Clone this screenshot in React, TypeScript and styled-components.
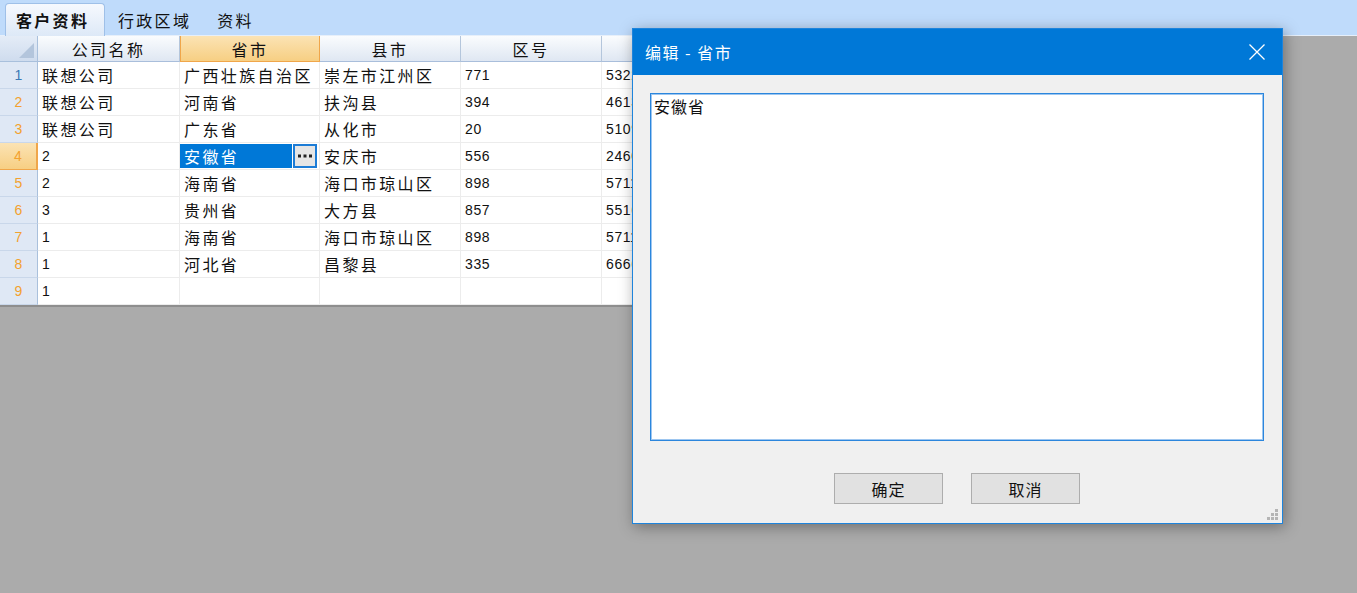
import { FC } from 'react';
import styled, { createGlobalStyle, css } from 'styled-components';

const GlobalStyle = createGlobalStyle`
    html, body {
        margin: 0;
        padding: 0;
        background: #ababab;
    }
    #root {
        height: 593px;
    }
`;

const cjk = `"Noto Sans CJK SC", "Noto Sans", sans-serif`;
const latin = `"Liberation Sans", "Noto Sans CJK SC", sans-serif`;

interface IRow {
    company: string;
    province: string;
    county: string;
    code: string;
    zip: string;
}

const rows: IRow[] = [
    { company: '联想公司', province: '广西壮族自治区', county: '崇左市江州区', code: '771', zip: '532200' },
    { company: '联想公司', province: '河南省', county: '扶沟县', code: '394', zip: '461300' },
    { company: '联想公司', province: '广东省', county: '从化市', code: '20', zip: '510900' },
    { company: '2', province: '安徽省', county: '安庆市', code: '556', zip: '246000' },
    { company: '2', province: '海南省', county: '海口市琼山区', code: '898', zip: '571100' },
    { company: '3', province: '贵州省', county: '大方县', code: '857', zip: '551600' },
    { company: '1', province: '海南省', county: '海口市琼山区', code: '898', zip: '571100' },
    { company: '1', province: '河北省', county: '昌黎县', code: '335', zip: '666600' },
    { company: '1', province: '', county: '', code: '', zip: '' },
];

const columns = ['公司名称', '省市', '县市', '区号', '邮编'];
const SELECTED_ROW = 3;

const isLatin = (s: string) => /^[0-9]*$/.test(s);

const App: FC = () => {
    return (
        <>
            <GlobalStyle />
            <Page>
                <TabBar>
                    <Tab $active>客户资料</Tab>
                    <Tab>行政区域</Tab>
                    <Tab>资料</Tab>
                </TabBar>
                <Grid>
                    <Corner />
                    {columns.map((c, i) => (
                        <HeaderCell key={c} $current={i === 1}>{c}</HeaderCell>
                    ))}
                    {rows.map((r, i) => {
                        const current = i === SELECTED_ROW;
                        return [
                            <RowNum key={`n${i}`} $current={current} $first={i === 0}>{i + 1}</RowNum>,
                            <Cell key={`a${i}`} $latin={isLatin(r.company)}>{r.company}</Cell>,
                            current ? (
                                <EditCell key={`b${i}`}>
                                    <EditText>{r.province}</EditText>
                                    <EllipsisButton>
                                        <svg width="16" height="4" viewBox="0 0 16 4">
                                            <rect x="1" y="0.5" width="3" height="3" fill="#222" />
                                            <rect x="6.5" y="0.5" width="3" height="3" fill="#222" />
                                            <rect x="12" y="0.5" width="3" height="3" fill="#222" />
                                        </svg>
                                    </EllipsisButton>
                                </EditCell>
                            ) : (
                                <Cell key={`b${i}`}>{r.province}</Cell>
                            ),
                            <Cell key={`c${i}`}>{r.county}</Cell>,
                            <Cell key={`d${i}`} $latin>{r.code}</Cell>,
                            <Cell key={`e${i}`} $latin>{r.zip}</Cell>,
                        ];
                    })}
                </Grid>

                <Dialog>
                    <TitleBar>
                        <Title>编辑 - 省市</Title>
                        <CloseButton>
                            <svg width="18" height="18" viewBox="0 0 18 18">
                                <path d="M1.5 1.5 L16.5 16.5 M16.5 1.5 L1.5 16.5" stroke="#fff" strokeWidth="1.3" />
                            </svg>
                        </CloseButton>
                    </TitleBar>
                    <DialogBody>
                        <TextArea defaultValue="安徽省" />
                        <Buttons>
                            <Button>确定</Button>
                            <Button>取消</Button>
                        </Buttons>
                    </DialogBody>
                    <Grip>
                        <svg width="12" height="12" viewBox="0 0 12 12">
                            <rect x="8" y="0" width="3" height="3" fill="#b5b5b5" />
                            <rect x="4" y="4" width="3" height="3" fill="#b5b5b5" />
                            <rect x="8" y="4" width="3" height="3" fill="#b5b5b5" />
                            <rect x="0" y="8" width="3" height="3" fill="#b5b5b5" />
                            <rect x="4" y="8" width="3" height="3" fill="#b5b5b5" />
                            <rect x="8" y="8" width="3" height="3" fill="#b5b5b5" />
                        </svg>
                    </Grip>
                </Dialog>
            </Page>
        </>
    );
};

const Page = styled.div`
    position: relative;
    width: 1357px;
    height: 593px;
    overflow: hidden;
    background: #ababab;
    font-family: ${cjk};
`;

const TabBar = styled.div`
    display: flex;
    align-items: flex-end;
    height: 35px;
    padding-left: 5px;
    background: #bfdbfb;
    border-bottom: 1px solid #e6effa;
`;

const Tab = styled.div<{ $active?: boolean }>`
    height: 32px;
    padding: 0 12px 0 10px;
    display: flex;
    align-items: center;
    font-size: 16px;
    letter-spacing: 2.3px;
    color: #111;
    box-sizing: border-box;
    border: 1px solid transparent;
    border-bottom: none;

    ${({ $active }) => $active && css`
        width: 100px;
        height: 33px;
        margin-bottom: -1px;
        padding-left: 10px;
        font-weight: bold;
        border-color: #9fc0e8;
        border-radius: 4px 4px 0 0;
        background: linear-gradient(#f6f9fe, #dde9f7);
    `}

    & + & {
        padding-left: 12px;
    }
`;

const Grid = styled.div`
    display: grid;
    grid-template-columns: 38px 142px 140px 141px 141px 141px;
    grid-template-rows: 26px repeat(9, 27px);
    width: 743px;
    background: #fff;
    border-bottom: 2px solid #8e8e8e;
`;

const Corner = styled.div`
    position: relative;
    background: linear-gradient(#e4ecf7, #cfdcee);
    border-right: 1px solid #a9c0dc;
    border-bottom: 1px solid #a9c0dc;

    &::after {
        content: '';
        position: absolute;
        right: 3px;
        bottom: 3px;
        border-style: solid;
        border-width: 0 0 15px 15px;
        border-color: transparent transparent #b3c5dc transparent;
    }
`;

const HeaderCell = styled.div<{ $current?: boolean }>`
    display: flex;
    align-items: center;
    justify-content: center;
    font-size: 16px;
    letter-spacing: 2.4px;
    color: #111;
    box-sizing: border-box;
    background: linear-gradient(#fafcfe, #dfe7f2);
    border-right: 1px solid #b4c6dc;
    border-bottom: 1px solid #a9bedb;

    ${({ $current }) => $current && css`
        background: linear-gradient(#fbe3b4, #f7cf83);
        border: 1px solid #f0a64a;
        border-top: none;
    `}
`;

const RowNum = styled.div<{ $current?: boolean; $first?: boolean }>`
    display: flex;
    align-items: center;
    justify-content: center;
    font-family: ${latin};
    font-size: 14px;
    color: ${({ $first }) => ($first ? '#3b79b5' : '#f3a12e')};
    background: #dfe8f5;
    box-sizing: border-box;
    border-right: 1px solid #a9c0dc;
    border-bottom: 1px solid #c9d7ea;

    ${({ $current }) => $current && css`
        background: linear-gradient(#fbe3b4, #f7cf83);
        border-right: 2px solid #f0a64a;
        border-bottom: 1px solid #f0a64a;
    `}
`;

const Cell = styled.div<{ $latin?: boolean }>`
    display: flex;
    align-items: center;
    padding-left: 4px;
    white-space: nowrap;
    overflow: hidden;
    box-sizing: border-box;
    color: #111;
    border-right: 1px solid #ececec;
    border-bottom: 1px solid #ececec;
    font-size: ${({ $latin }) => ($latin ? '14px' : '16px')};
    font-family: ${({ $latin }) => ($latin ? latin : cjk)};
    letter-spacing: ${({ $latin }) => ($latin ? '0.6px' : '2.4px')};
`;

const EditCell = styled.div`
    display: flex;
    align-items: stretch;
    gap: 1px;
    padding: 1px 2px 1px 0;
    box-sizing: border-box;
    border-right: 1px solid #ececec;
    border-bottom: 1px solid #ececec;
`;

const EditText = styled.div`
    flex: 1;
    display: flex;
    align-items: center;
    padding-left: 4px;
    background: #0078d7;
    color: #fff;
    font-size: 16px;
    letter-spacing: 2.4px;
`;

const EllipsisButton = styled.div`
    width: 24px;
    display: flex;
    align-items: center;
    justify-content: center;
    box-sizing: border-box;
    border: 2px solid #1c7cd6;
    background: #e5e5e5;
`;

const Dialog = styled.div`
    position: absolute;
    left: 632px;
    top: 28px;
    width: 651px;
    height: 496px;
    box-sizing: border-box;
    display: flex;
    flex-direction: column;
    background: #f0f0f0;
    border: 1px solid #1e84dc;
    box-shadow: 2px 3px 14px rgba(0, 0, 0, 0.35);
`;

const TitleBar = styled.div`
    height: 46px;
    flex: none;
    display: flex;
    align-items: center;
    justify-content: space-between;
    padding: 0 16px 0 12px;
    background: #0078d7;
`;

const Title = styled.span`
    color: #fff;
    font-size: 16px;
    letter-spacing: 1.5px;
    white-space: nowrap;
`;

const CloseButton = styled.div`
    display: flex;
    align-items: center;
`;

const DialogBody = styled.div`
    flex: 1;
    display: flex;
    flex-direction: column;
    padding: 18px 18px 0 17px;
`;

const TextArea = styled.textarea`
    width: 614px;
    height: 348px;
    box-sizing: border-box;
    resize: none;
    margin: 0;
    padding: 0 3px;
    border: 1px solid #2b86dd;
    box-shadow: inset 0 0 0 1px #9dc6f0;
    outline: none;
    background: #fff;
    font-family: ${cjk};
    font-size: 16px;
    letter-spacing: 1px;
    color: #111;
`;

const Buttons = styled.div`
    display: flex;
    justify-content: center;
    gap: 28px;
    margin-top: 32px;
`;

const Button = styled.button`
    width: 109px;
    height: 31px;
    padding: 0;
    background: #e1e1e1;
    border: 1px solid #adadad;
    font-family: ${cjk};
    font-size: 16px;
    letter-spacing: 1px;
    color: #111;
`;

const Grip = styled.div`
    position: absolute;
    right: 3px;
    bottom: 2px;
    line-height: 0;
`;

export default App;
